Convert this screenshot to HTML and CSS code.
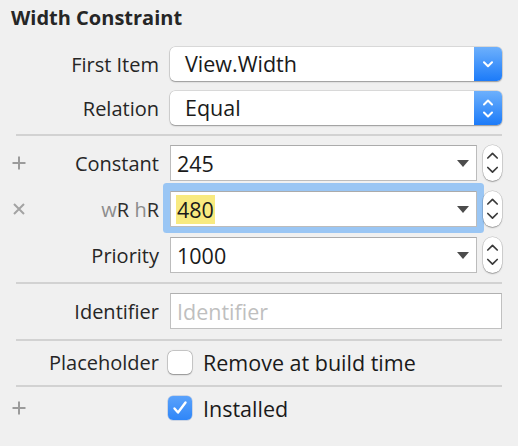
FILE: index.html
```html
<!DOCTYPE html>
<html>
<head>
<meta charset="utf-8">
<link rel="stylesheet" href="styles.css">
</head>
<body>
<div class="panel">
  <div class="title">Width Constraint</div>

  <div class="group">
    <div class="row row-popup">
      <span class="gutter"></span>
      <span class="lbl">First Item</span>
      <div class="popup">
        <span class="popup-text">View.Width</span>
        <span class="popup-btn">
          <svg width="10" height="7" viewBox="0 0 10 7"><path d="M1 1.2 L5 5.2 L9 1.2" fill="none" stroke="#fff" stroke-width="2" stroke-linecap="round" stroke-linejoin="round"/></svg>
        </span>
      </div>
    </div>
    <div class="row row-popup">
      <span class="gutter"></span>
      <span class="lbl">Relation</span>
      <div class="popup">
        <span class="popup-text">Equal</span>
        <span class="popup-btn">
          <svg width="10" height="19" viewBox="0 0 10 19"><path d="M1 5.5 L5 1.5 L9 5.5 M1 13.5 L5 17.5 L9 13.5" fill="none" stroke="#fff" stroke-width="2" stroke-linecap="round" stroke-linejoin="round"/></svg>
        </span>
      </div>
    </div>
  </div>

  <div class="sep"></div>

  <div class="group">
    <div class="row row-field">
      <span class="gutter"><svg class="ico" width="14" height="14" viewBox="0 0 14 14"><path d="M7 0.5 V13.5 M0.5 7 H13.5" stroke="#9b9b9b" stroke-width="2"/></svg></span>
      <span class="lbl">Constant</span>
      <div class="combo"><span class="val">245</span><span class="tri"></span></div>
      <div class="stepper"><svg width="19" height="36" viewBox="0 0 19 36"><path d="M4.8 13 L9.5 8.3 L14.2 13 M4.8 22.5 L9.5 27.2 L14.2 22.5" fill="none" stroke="#3a3a3a" stroke-width="1.7" stroke-linecap="round" stroke-linejoin="round"/></svg></div>
    </div>
    <div class="row row-field">
      <span class="gutter"><svg class="ico" width="12" height="12" viewBox="0 0 12 12"><path d="M1 1 L11 11 M11 1 L1 11" stroke="#a3a3a3" stroke-width="2"/></svg></span>
      <span class="lbl size"><span class="dim">w</span>R <span class="dim">h</span>R</span>
      <div class="combo focused"><span class="val hl">480</span><span class="tri"></span></div>
      <div class="stepper"><svg width="19" height="36" viewBox="0 0 19 36"><path d="M4.8 13 L9.5 8.3 L14.2 13 M4.8 22.5 L9.5 27.2 L14.2 22.5" fill="none" stroke="#3a3a3a" stroke-width="1.7" stroke-linecap="round" stroke-linejoin="round"/></svg></div>
    </div>
    <div class="row row-field">
      <span class="gutter"></span>
      <span class="lbl">Priority</span>
      <div class="combo"><span class="val">1000</span><span class="tri"></span></div>
      <div class="stepper"><svg width="19" height="36" viewBox="0 0 19 36"><path d="M4.8 13 L9.5 8.3 L14.2 13 M4.8 22.5 L9.5 27.2 L14.2 22.5" fill="none" stroke="#3a3a3a" stroke-width="1.7" stroke-linecap="round" stroke-linejoin="round"/></svg></div>
    </div>
  </div>

  <div class="sep"></div>

  <div class="row row-field">
    <span class="gutter"></span>
    <span class="lbl">Identifier</span>
    <div class="textfield"><span class="placeholder">Identifier</span></div>
  </div>

  <div class="sep sep-b"></div>

  <div class="row row-check">
    <span class="gutter"></span>
    <span class="lbl">Placeholder</span>
    <span class="checkbox"></span>
    <span class="check-text">Remove at build time</span>
  </div>

  <div class="sep sep-c"></div>

  <div class="row row-check">
    <span class="gutter"><svg class="ico" width="14" height="14" viewBox="0 0 14 14"><path d="M7 0.5 V13.5 M0.5 7 H13.5" stroke="#9b9b9b" stroke-width="2"/></svg></span>
    <span class="lbl"></span>
    <span class="checkbox checked"><svg width="24" height="24" viewBox="0 0 24 24"><path d="M6.5 12.5 L10 16.5 L17.5 6.5" fill="none" stroke="#fff" stroke-width="2.4" stroke-linecap="round" stroke-linejoin="round"/></svg></span>
    <span class="check-text">Installed</span>
  </div>
</div>
</body>
</html>
```

FILE: styles.css
```css
* { box-sizing: border-box; }
html { background: #f0f0f0; }
html, body { margin: 0; padding: 0; }
body {
  width: 518px;
  height: 446px;
  overflow: hidden;
  font-family: "Open Sans", "Liberation Sans", sans-serif;
  color: #262626;
}
.panel { padding-top: 6px; }
.title {
  height: 24px;
  line-height: 24px;
  padding-left: 11px;
  font-size: 20px;
  font-weight: 700;
  color: #262626;
  margin-bottom: 17px;
}
.group { display: flex; flex-direction: column; gap: 10px; }
.row { display: flex; align-items: center; padding-right: 16px; }
.gutter {
  width: 38px;
  flex: none;
  display: flex;
  justify-content: center;
  align-items: center;
}
.ico { display: block; }
.lbl {
  width: 121px;
  flex: none;
  margin-right: 11px;
  text-align: right;
  font-size: 20px;
  white-space: nowrap;
  color: #262626;
}
.size { color: #2e2e2e; }
.dim { color: #8c8c8c; }

.row-popup { height: 34px; }
.popup {
  flex: 1;
  height: 34px;
  display: flex;
  background: #fff;
  border-radius: 5px;
  box-shadow: 0 0 0 0.5px rgba(0,0,0,0.18), 0 1px 1.5px rgba(0,0,0,0.3);
}
.popup-text {
  flex: 1;
  padding-left: 15px;
  font-size: 21.5px;
  line-height: 34px;
  color: #1a1a1a;
}
.popup-btn {
  width: 28px;
  flex: none;
  display: flex;
  align-items: center;
  justify-content: center;
  border-radius: 0 5px 5px 0;
  background: linear-gradient(#6db0fc, #1c7bf9);
}

.row-field { height: 36px; }
.combo {
  flex: 1;
  height: 36px;
  display: flex;
  align-items: center;
  justify-content: space-between;
  background: #fff;
  border: 1px solid #bcbcbc;
  border-top-color: #ababab;
  padding-left: 5px;
  padding-right: 7px;
}
.combo.focused {
  border-radius: 1px;
  box-shadow: 0 -1px 0 7px #9ac6f4;
}
.val {
  font-size: 21.5px;
  line-height: 29px;
  padding: 0 1px;
  color: #1a1a1a;
}
.hl { background: #f8ea80; }
.tri {
  width: 0;
  height: 0;
  border-left: 6px solid transparent;
  border-right: 6px solid transparent;
  border-top: 7px solid #4c4c4c;
}
.stepper {
  width: 19px;
  height: 36px;
  flex: none;
  margin-left: 6px;
  background: #fff;
  border-radius: 9.5px;
  box-shadow: 0 0 0 0.5px rgba(0,0,0,0.2), 0 1px 1.5px rgba(0,0,0,0.28);
}
.stepper svg { display: block; }

.textfield {
  flex: 1;
  height: 36px;
  display: flex;
  align-items: center;
  background: #fff;
  border: 1px solid #c0c0c0;
  border-top-color: #b0b0b0;
  padding-left: 6px;
}
.placeholder { font-size: 21.5px; color: #bfbfbf; }

.sep {
  height: 2px;
  background: #d2d2d2;
  margin: 9px 16px 9px 16px;
}
.sep-b { margin-top: 10px; }
.sep-c { margin-top: 11px; }

.row-check { height: 24px; }
.checkbox {
  width: 24px;
  height: 23px;
  flex: none;
  margin-left: -2px;
  background: #fff;
  border-radius: 5px;
  box-shadow: 0 0 0 0.5px rgba(0,0,0,0.25), 0 0.5px 1.5px rgba(0,0,0,0.3);
}
.checkbox.checked {
  height: 24px;
  background: linear-gradient(#5aa2fb, #2f86f8);
  box-shadow: 0 0 0 0.5px rgba(0,60,160,0.3);
}
.checkbox svg { display: block; }
.check-text {
  margin-left: 11px;
  font-size: 21.5px;
  color: #1a1a1a;
  white-space: nowrap;
}
```
